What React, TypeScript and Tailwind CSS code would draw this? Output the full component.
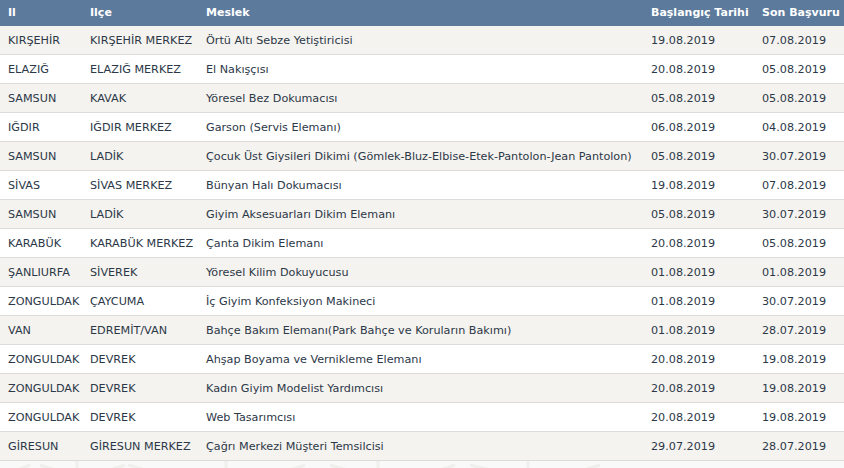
import React from "react";

interface Job {
  il: string;
  ilce: string;
  meslek: string;
  baslangic: string;
  sonBasvuru: string;
}

const jobs: Job[] = [
  { il: "KIRŞEHİR", ilce: "KIRŞEHİR MERKEZ", meslek: "Örtü Altı Sebze Yetiştiricisi", baslangic: "19.08.2019", sonBasvuru: "07.08.2019" },
  { il: "ELAZIĞ", ilce: "ELAZIĞ MERKEZ", meslek: "El Nakışçısı", baslangic: "20.08.2019", sonBasvuru: "05.08.2019" },
  { il: "SAMSUN", ilce: "KAVAK", meslek: "Yöresel Bez Dokumacısı", baslangic: "05.08.2019", sonBasvuru: "05.08.2019" },
  { il: "IĞDIR", ilce: "IĞDIR MERKEZ", meslek: "Garson (Servis Elemanı)", baslangic: "06.08.2019", sonBasvuru: "04.08.2019" },
  { il: "SAMSUN", ilce: "LADİK", meslek: "Çocuk Üst Giysileri Dikimi (Gömlek-Bluz-Elbise-Etek-Pantolon-Jean Pantolon)", baslangic: "05.08.2019", sonBasvuru: "30.07.2019" },
  { il: "SİVAS", ilce: "SİVAS MERKEZ", meslek: "Bünyan Halı Dokumacısı", baslangic: "19.08.2019", sonBasvuru: "07.08.2019" },
  { il: "SAMSUN", ilce: "LADİK", meslek: "Giyim Aksesuarları Dikim Elemanı", baslangic: "05.08.2019", sonBasvuru: "30.07.2019" },
  { il: "KARABÜK", ilce: "KARABÜK MERKEZ", meslek: "Çanta Dikim Elemanı", baslangic: "20.08.2019", sonBasvuru: "05.08.2019" },
  { il: "ŞANLIURFA", ilce: "SİVEREK", meslek: "Yöresel Kilim Dokuyucusu", baslangic: "01.08.2019", sonBasvuru: "01.08.2019" },
  { il: "ZONGULDAK", ilce: "ÇAYCUMA", meslek: "İç Giyim Konfeksiyon Makineci", baslangic: "01.08.2019", sonBasvuru: "30.07.2019" },
  { il: "VAN", ilce: "EDREMİT/VAN", meslek: "Bahçe Bakım Elemanı(Park Bahçe ve Koruların Bakımı)", baslangic: "01.08.2019", sonBasvuru: "28.07.2019" },
  { il: "ZONGULDAK", ilce: "DEVREK", meslek: "Ahşap Boyama ve Vernikleme Elemanı", baslangic: "20.08.2019", sonBasvuru: "19.08.2019" },
  { il: "ZONGULDAK", ilce: "DEVREK", meslek: "Kadın Giyim Modelist Yardımcısı", baslangic: "20.08.2019", sonBasvuru: "19.08.2019" },
  { il: "ZONGULDAK", ilce: "DEVREK", meslek: "Web Tasarımcısı", baslangic: "20.08.2019", sonBasvuru: "19.08.2019" },
  { il: "GİRESUN", ilce: "GİRESUN MERKEZ", meslek: "Çağrı Merkezi Müşteri Temsilcisi", baslangic: "29.07.2019", sonBasvuru: "28.07.2019" },
];

const cols = "grid grid-cols-[82px_116px_445px_111px_1fr]";

function App() {
  return (
    <div className="min-h-[468px] w-[844px] overflow-hidden bg-[#f9f9f9] font-['DejaVu_Sans',Verdana,sans-serif] text-[11.2px] text-[#2c3848]">
      <div className={`${cols} h-[26px] items-center whitespace-nowrap bg-[#5b7a9c] pl-2 pt-px text-[11px] font-bold text-white`}>
        <div>Il</div>
        <div>Ilçe</div>
        <div>Meslek</div>
        <div>Başlangıç Tarihi</div>
        <div>Son Başvuru</div>
      </div>
      {jobs.map((job, i) => (
        <div
          key={i}
          className={`${cols} h-[29px] items-center whitespace-nowrap border-b border-[#dddbd7] pl-2 pt-[3px] ${
            i % 2 === 0 ? "bg-[#f5f3ef]" : "bg-white"
          }`}
        >
          <div>{job.il}</div>
          <div>{job.ilce}</div>
          <div>{job.meslek}</div>
          <div>{job.baslangic}</div>
          <div>{job.sonBasvuru}</div>
        </div>
      ))}
      <svg width="844" height="20" className="block">
        <g stroke="#efefed" strokeWidth="3" fill="none">
          <path d="M0 16 L30 4 M40 4 L75 16 M77 0 L77 20 M90 16 L125 4 M128 4 L170 16 M226 0 L226 20 M270 16 L305 4 M330 4 L370 16 M378 0 L378 20 M420 16 L455 4 M470 4 L520 16 M528 0 L528 20 M560 16 L600 4" />
        </g>
      </svg>
    </div>
  );
}

export default App;
